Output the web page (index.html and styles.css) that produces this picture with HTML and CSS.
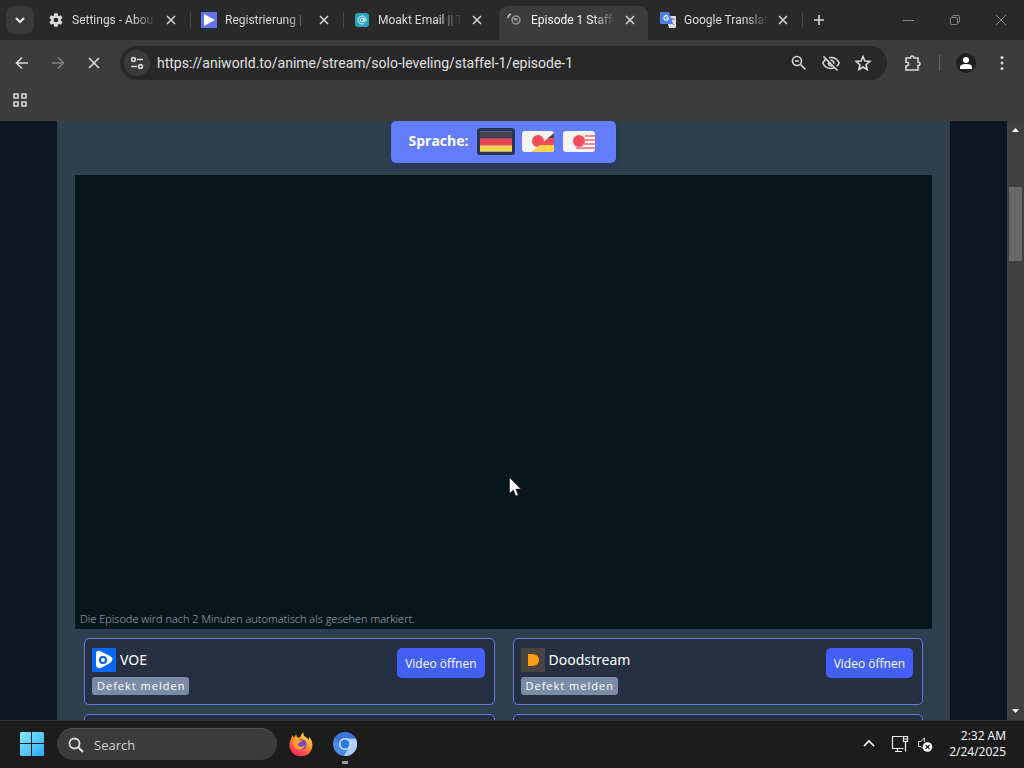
FILE: index.html
```html
<!DOCTYPE html>
<html lang="de">
<head>
<meta charset="utf-8">
<title>Episode 1 Staffel 1</title>
<link rel="stylesheet" href="styles.css">
</head>
<body>
<header class="browser">
  <div class="tabstrip">
    <button class="tab-search" aria-label="Search tabs"><svg width="12" height="12" viewBox="0 0 12 12"><path d="M2 4l4 4 4-4" fill="none" stroke="#e6e6e6" stroke-width="2"/></svg></button>
    <nav class="tabs" aria-label="Tabs">
      <div class="tab">
        <svg class="favicon" viewBox="0 0 24 24"><path fill="#d8d8d8" d="M19.4 13a7.500 7.500 0 0 0 0-2l2.100-1.600c.2-.2.300-.4.100-.6l-2-3.500c-.1-.2-.4-.3-.6-.2l-2.500 1a7.300 7.300 0 0 0-1.700-1L14.400 2.400c0-.2-.2-.4-.5-.4h-4c-.2 0-.4.200-.5.400L9 5.100c-.6.200-1.200.6-1.700 1l-2.500-1c-.2-.1-.5 0-.6.200l-2 3.500c-.1.200-.1.500.1.600L4.500 11a7.500 7.500 0 0 0 0 2l-2.200 1.600c-.2.200-.2.400-.1.600l2 3.500c.1.200.4.300.6.200l2.500-1c.5.400 1.100.7 1.700 1l.4 2.700c.1.200.3.400.5.400h4c.3 0 .5-.2.500-.4l.4-2.700c.6-.2 1.200-.6 1.700-1l2.500 1c.2.100.5 0 .6-.2l2-3.500c.1-.2.1-.5-.1-.6zM12 15.500a3.500 3.500 0 1 1 0-7 3.500 3.500 0 0 1 0 7z"/></svg>
        <button class="tab-title">Settings - Abou</button>
        <button class="close" aria-label="Close tab"><svg width="10" height="10" viewBox="0 0 10 10"><path d="M1 1l8 8M9 1L1 9"/></svg></button>
      </div>
      <div class="tab">
        <svg class="favicon" viewBox="0 0 16 16"><path fill="#6572f0" d="M0 0h16v16H0z"/><path fill="#fff" d="M3 2l11 6-11 6z"/></svg>
        <button class="tab-title">Registrierung |</button>
        <button class="close" aria-label="Close tab"><svg width="10" height="10" viewBox="0 0 10 10"><path d="M1 1l8 8M9 1L1 9"/></svg></button>
      </div>
      <div class="tab">
        <svg class="favicon" viewBox="0 0 16 16"><rect x="1" y="1" width="14" height="14" rx="3" fill="#2ba3bd"/><circle cx="8" cy="8" r="1.800" fill="none" stroke="#fff"/><path d="M10 6v3q1 1.500 2-.5A4 4 0 1 0 10 11.500" fill="none" stroke="#e5ffff"/></svg>
        <button class="tab-title">Moakt Email || T</button>
        <button class="close" aria-label="Close tab"><svg width="10" height="10" viewBox="0 0 10 10"><path d="M1 1l8 8M9 1L1 9"/></svg></button>
      </div>
      <div class="tab active">
        <svg class="favicon" viewBox="0 0 16 16"><path d="M1 6q0-3 3-4" fill="none" stroke="#c4c4c4" stroke-width="1.500"/><circle cx="9" cy="8" r="4" fill="none" stroke="#969696" stroke-width="1.500"/><path d="M6 6l3 0 2 1-1 2-3-1zM10 11l1-2 1 1z" fill="#969696"/></svg>
        <button class="tab-title">Episode 1 Staffe</button>
        <button class="close" aria-label="Close tab"><svg width="10" height="10" viewBox="0 0 10 10"><path d="M1 1l8 8M9 1L1 9"/></svg></button>
      </div>
      <div class="tab">
        <svg class="favicon" viewBox="0 0 16 16"><path fill="#ddd" d="M6 4h9a1 1 0 0 1 1 1v10a1 1 0 0 1-1 1H9z"/><path d="M9 7h6M12 6v1q0 4-3 5M10 9l4 4" stroke="#748196" fill="none"/><path fill="#4a7ee8" d="M1 0h8l4 12H1a1 1 0 0 1-1-1V1a1 1 0 0 1 1-1z"/><path d="M8 4.500A2.300 2.300 0 1 0 8.500 6H6" fill="none" stroke="#fff" stroke-width="1.100"/></svg>
        <button class="tab-title">Google Translat</button>
        <button class="close" aria-label="Close tab"><svg width="10" height="10" viewBox="0 0 10 10"><path d="M1 1l8 8M9 1L1 9"/></svg></button>
      </div>
    </nav>
    <button class="new-tab" aria-label="New tab"><svg width="12" height="12" viewBox="0 0 12 12"><path d="M6 1v10M1 6h10" stroke="#d8d8d8" stroke-width="1.600"/></svg></button>
    <div class="window-controls">
      <button aria-label="Minimize"><svg width="12" height="12" viewBox="0 0 12 12"><path d="M0 6.500h11"/></svg></button>
      <button aria-label="Restore"><svg width="12" height="12" viewBox="0 0 12 12"><rect x="1.500" y="3.500" width="7" height="7" rx="1"/><path d="M3.500 3V2.500q0-1 1-1h5q1 0 1 1v5q0 1-1.500 1"/></svg></button>
      <button aria-label="Close"><svg width="12" height="12" viewBox="0 0 12 12"><path d="M1 1l10 10M11 1L1 11"/></svg></button>
    </div>
  </div>
  <div class="toolbar">
    <button class="nav-button" aria-label="Back"><svg width="16" height="16" viewBox="0 0 16 16"><path d="M14 8H3M8 2.500L2.500 8 8 13.500"/></svg></button>
    <button class="nav-button dim" aria-label="Forward"><svg width="16" height="16" viewBox="0 0 16 16"><path d="M2 8h11M8 2.500L13.500 8 8 13.500"/></svg></button>
    <button class="nav-button" aria-label="Stop"><svg width="16" height="16" viewBox="0 0 16 16"><path d="M3 3l10 10M13 3L3 13"/></svg></button>
    <div class="omnibox">
      <button class="site-info" aria-label="Site information"><svg width="16" height="16" viewBox="0 0 16 16"><circle cx="4.500" cy="4.500" r="1.900"/><path d="M8 4.500h6M2 11.500h6"/><circle cx="11.500" cy="11.500" r="1.900"/></svg></button>
      <input class="url" aria-label="Address" value="https://aniworld.to/anime/stream/solo-leveling/staffel-1/episode-1">
      <button class="icon-button" aria-label="Zoom"><svg width="18" height="18" viewBox="0 0 18 18"><circle cx="7" cy="7" r="4.500"/><path d="M5 7h4M10.500 10.500l5 5"/></svg></button>
      <button class="icon-button" aria-label="Tracking protection"><svg width="20" height="18" viewBox="0 0 20 18"><path d="M2.500 2.500l14 14M5.500 4.800Q3 6.300 1.800 9q2.600 5.500 8.200 5.500 2 0 3.500-.7M8 3.700q7-1.200 10.200 5.300-.9 1.900-2.300 3.200M9.300 6.200q3.700 0 3.500 3.500M7.500 8q-.5 3.800 3.300 4"/></svg></button>
      <button class="icon-button" aria-label="Bookmark"><svg width="18" height="18" viewBox="0 0 18 18"><path d="M9 2.500l1.900 4.600 4.900.4-3.700 3.200 1.100 4.800L9 13l-4.200 2.500 1.100-4.800-3.700-3.200 4.900-.4z"/></svg></button>
    </div>
    <button class="icon-button extensions" aria-label="Extensions"><svg width="18" height="18" viewBox="0 0 18 18"><path d="M2 4h4.500q0-2 1.700-2T10 4h4v4q2 0 2 1.700T14 11.500V16H2v-4q2.500 0 2.500-2T2 8z"/></svg></button>
    <span class="divider"></span>
    <button class="profile" aria-label="Profile"><svg width="14" height="14" viewBox="0 0 14 14"><circle cx="7" cy="4" r="3" fill="#fff"/><path d="M1 13v-2q0-3 6-3t6 3v2z" fill="#fff"/></svg></button>
    <button class="icon-button" aria-label="Menu"><svg width="4" height="16" viewBox="0 0 4 16"><g fill="#d8d8d8" stroke="none"><circle cx="2" cy="2.500" r="1.500"/><circle cx="2" cy="8" r="1.500"/><circle cx="2" cy="13.500" r="1.500"/></g></svg></button>
  </div>
  <div class="bookmarks">
    <button class="nav-button" aria-label="Apps"><svg width="16" height="16" viewBox="0 0 16 16"><path d="M2 2h4v4H2zM10 2h4v4h-4zM2 10h4v4H2zM10 10h4v4h-4z"/></svg></button>
  </div>
</header>

<main class="viewport">
  <div class="page">
    <section class="panel">
      <div class="languages">
        <strong>Sprache:</strong>
        <button class="flag selected" aria-label="Deutsch"><svg viewBox="0 0 32 20"><path fill="#494452" d="M0 0h32v7H0z"/><path fill="#e94450" d="M0 7h32v7H0z"/><path fill="#ffd54b" d="M0 14h32v6H0z"/></svg></button>
        <button class="flag" aria-label="Japanisch mit deutschen Untertiteln"><svg viewBox="0 0 32 21"><path fill="#f5f5f5" d="M0 0h32v21H0z"/><circle cx="16" cy="10" r="6" fill="#f24c5a"/><path fill="#494452" d="M32 2v5h-6z"/><path fill="#f24c5a" d="M26 7h6v7H18z"/><path fill="#ffd54b" d="M18 14h14v7H9z"/></svg></button>
        <button class="flag" aria-label="Japanisch mit englischen Untertiteln"><svg viewBox="0 0 32 21"><path fill="#f5f5f5" d="M0 0h32v21H0z"/><circle cx="16" cy="10" r="6" fill="#f24c5a"/><path stroke="#f46670" stroke-width="1.700" d="M22 5h10M20 9h12M18 13h14M13 17h19"/></svg></button>
      </div>
      <div class="player"><p>Die Episode wird nach 2 Minuten automatisch als gesehen markiert.</p></div>
      <div class="hosters">
        <article class="hoster">
          <div>
            <h2><svg width="24" height="24" viewBox="0 0 24 24"><path fill="#0867f5" d="M0 0h24v24H0z"/><path fill="#fff" d="M4 6q0-4 4-3l10 5q5 3 0 7L9 20q-4 1-5-3z"/><circle cx="11" cy="12" r="4" fill="#075ce2"/><circle cx="11" cy="12" r="2" fill="#fff"/></svg>VOE</h2>
            <button class="report">Defekt melden</button>
          </div>
          <button class="open">Video öffnen</button>
        </article>
        <article class="hoster">
          <div>
            <h2><svg width="24" height="24" viewBox="0 0 24 24"><path fill="#474442" d="M0 0h24v24H0z"/><path fill="#ff9f13" d="M7 6h5q6 1 6 6t-6 6H7z"/></svg>Doodstream</h2>
            <button class="report">Defekt melden</button>
          </div>
          <button class="open">Video öffnen</button>
        </article>
        <article class="hoster"></article>
        <article class="hoster"></article>
      </div>
    </section>
  </div>
  <div class="scrollbar">
    <svg width="7" height="4" viewBox="0 0 7 4"><path fill="#fff" d="M0 4l3.500-4L7 4z"/></svg>
    <span class="thumb"></span>
    <svg width="7" height="4" viewBox="0 0 7 4"><path fill="#fff" d="M0 0l3.500 4L7 0z"/></svg>
  </div>
</main>

<footer class="taskbar">
  <button class="start" aria-label="Start"><svg width="24" height="24" viewBox="0 0 24 24"><defs><linearGradient id="win" x1="0" y1="0" x2="1" y2="1"><stop stop-color="#8be7ff"/><stop offset="1" stop-color="#27aef5"/></linearGradient></defs><path fill="url(#win)" d="M1 0h10v11H0V1zM12 0h11l1 1v10H12zM0 12h11v12H1l-1-1zM12 12h12v11l-1 1H12z"/></svg></button>
  <label class="search"><svg width="16" height="16" viewBox="0 0 16 16"><circle cx="6.500" cy="6.500" r="5" fill="none" stroke="#ddd" stroke-width="1.800"/><path d="M10.500 10.500l4.500 4.500" stroke="#ddd" stroke-width="2"/></svg><input placeholder="Search" aria-label="Search"></label>
  <button class="app" aria-label="Firefox"><svg width="24" height="24" viewBox="0 0 24 24"><defs><linearGradient id="fox" x1=".8" y1="0" x2=".2" y2="1"><stop stop-color="#fff04a"/><stop offset=".4" stop-color="#ff9a28"/><stop offset=".8" stop-color="#ff3c55"/><stop offset="1" stop-color="#e51b76"/></linearGradient></defs><path fill="url(#fox)" d="M14.500 0q-1 3 2 5 2.500 1 3 3l1-3q3 4 3 8A11.500 11.500 0 0 1 .5 13Q.5 8 3 5V3l2 2.500L7.500 2q-.5 2 1 3.500H11Q12 2 14.500 0z"/><circle cx="12" cy="12.500" r="5.500" fill="#7844c6"/><path fill="#ff9d2d" d="M4 7q4-2 7 1l3 .5-3 2q-2 0-2 3 4 3 7-1-1 6-7 5-6-2-5-10.500z"/></svg></button>
  <button class="app running" aria-label="Chromium"><svg width="24" height="24" viewBox="0 0 24 24"><circle cx="12" cy="12" r="12" fill="#4b8be9"/><path fill="#afceff" d="M12 6.500h10.700A12 12 0 0 1 11 24l5.500-9.500z"/><path fill="#2865ca" d="M2 5.500A12 12 0 0 1 22.500 6.500H12a5.500 5.500 0 0 0-5 7z" opacity=".55"/><circle cx="12" cy="12" r="6" fill="#d3e5ff"/><circle cx="12" cy="12" r="4.500" fill="#2878e6"/></svg></button>
  <div class="tray">
    <button aria-label="Show hidden icons"><svg width="12" height="12" viewBox="0 0 12 12"><path d="M1 8l5-5 5 5" fill="none" stroke="#fff" stroke-width="1.600"/></svg></button>
    <button class="status" aria-label="Network and volume"><svg width="18" height="18" viewBox="0 0 18 18" fill="none" stroke="#eee" stroke-width="1.200"><path d="M11.500 1.500h-10v12h11M4 16.500h7M6.500 13.500v3M12.500 1.500h4v5h-4zM14.500 6.500v10M12.500 4h4"/></svg><svg width="16" height="18" viewBox="0 0 16 18"><path d="M7.500 3L4 6.500H1.500v5H4l2 2M7.500 3v4" fill="none" stroke="#ddd"/><circle cx="10.500" cy="12" r="4.800" fill="#fff"/><path d="M8.500 10l4 4m0-4l-4 4" stroke="#222" stroke-width="1.200"/></svg></button>
    <button class="clock"><time>2:32 AM</time><time>2/24/2025</time></button>
  </div>
</footer>
<svg class="pointer" width="12" height="20" viewBox="0 0 12 20"><path fill="#fff" stroke="#111" stroke-width=".5" d="M.5.500v16l3.800-3.600 2.500 6 2.500-1-2.500-5.800h5z"/></svg>
</body>
</html>
```
FILE: styles.css
```css
* { box-sizing: border-box; }
body {
  display: flex;
  flex-direction: column;
  height: 100vh;
  margin: 0;
  overflow: hidden;
  background: #1c1c1c;
  color: #fff;
  font-family: "Noto Sans", "Open Sans", sans-serif;
}
button {
  display: flex;
  flex-shrink: 0;
  align-items: center;
  justify-content: center;
  padding: 0;
  border: 0;
  background: none;
  color: inherit;
  font: inherit;
}
svg { flex-shrink: 0; }
input { min-width: 0; border: 0; outline: 0; background: none; color: inherit; font: inherit; }

.browser { flex: none; background: #3c3c3c; }
.tabstrip { display: flex; align-items: center; height: 40px; padding-left: 6px; background: #292929; }
.tab-search { width: 28px; height: 28px; border-radius: 9px; background: #3a3a3a; }
.tabs { display: flex; flex: 0 1 765px; align-self: stretch; min-width: 0; margin-left: 4px; }
.tab {
  display: flex;
  flex: 1 1 0;
  align-items: center;
  min-width: 0;
  padding: 0 13px 0 10px;
  background: linear-gradient(#444, #444) right center / 1px 16px no-repeat;
}
.tab:nth-child(3) { background: none; }
.tab.active { align-self: flex-end; height: 34px; margin: 0 2px; padding: 0 11px 6px 8px; border-radius: 9px 9px 0 0; background: #3c3c3c; }
.favicon { width: 16px; height: 16px; }
.tab-title {
  flex: 1;
  justify-content: flex-start;
  min-width: 0;
  margin: 0 4px 0 8px;
  color: #d8d8d8;
  font-family: Roboto, sans-serif;
  font-size: 12px;
  line-height: 20px;
  white-space: nowrap;
  mask-image: linear-gradient(to right, #000 62px, transparent 84px);
}
.active .tab-title { color: #f4f4f4; }
.close { width: 14px; height: 16px; }
.close svg { fill: none; stroke: #d8d8d8; stroke-width: 1.5; }
.new-tab { width: 28px; height: 28px; margin-left: 2px; }
.window-controls { display: flex; align-self: stretch; margin-left: auto; }
.window-controls button { width: 46px; }
.window-controls svg { fill: none; stroke: #858585; }

.toolbar { display: flex; align-items: center; height: 46px; padding: 0 7px 0 8px; }
.nav-button { width: 28px; height: 28px; margin-right: 8px; }
.nav-button svg, .site-info svg, .icon-button svg { fill: none; stroke: #d8d8d8; stroke-width: 1.6; }
.nav-button.dim svg { stroke: #808080; }
.omnibox { display: flex; flex: 1; align-items: center; min-width: 0; height: 34px; margin-left: 4px; padding: 0 8px 0 4px; border-radius: 17px; background: #282828; }
.site-info { width: 26px; height: 26px; border-radius: 50%; background: #3a3a3a; }
.url { flex: 1; padding: 0; margin-left: 7px; color: #e0e0e0; font-family: Roboto, sans-serif; font-size: 14px; }
.icon-button { width: 32px; height: 28px; }
.icon-button:last-child { width: 30px; }
.omnibox .icon-button:last-child { width: 32px; }
.extensions { margin-left: 10px; }
.divider { width: 1px; height: 16px; margin: 0 16px 0 10px; background: #686868; }
.profile { width: 20px; height: 20px; margin-right: 11px; border-radius: 50%; background: #1f1f1f; }
.bookmarks { height: 35px; padding: 0 6px; }

.viewport { display: flex; flex: 1; min-height: 0; background: #101722; }
.page { flex: 1; min-width: 0; padding: 0 57px; overflow: hidden; }
.panel { padding: 0 18px; background: #2f404d; }
.languages {
  display: flex;
  align-items: center;
  width: fit-content;
  height: 42px;
  margin: 0 auto;
  padding: 0 18px 2px 17px;
  border-radius: 5px;
  background: #637cf9;
  box-shadow: 0 2px 8px #253461;
  font-family: "Open Sans", sans-serif;
  font-size: 14px;
}
.languages strong { margin-right: 8px; padding-bottom: 2px; }
.flag { width: 32px; height: 21px; margin-right: 3px; overflow: hidden; border-radius: 3px; }
.flag + .flag { margin-left: 6px; }
.flag svg { width: 100%; height: 100%; }
.flag.selected { width: 38px; height: 27px; margin-right: 1px; border: 3px solid #26344d; }
.player { display: flex; align-items: flex-end; aspect-ratio: 857 / 454; margin-top: 12px; padding: 0 5px; background: #07151c; }
.player p { margin: 0; color: #a9b5b9; font-family: "Open Sans", sans-serif; font-size: 11px; font-weight: 300; line-height: 20px; }
.hosters { display: grid; grid-template-columns: 1fr 1fr; gap: 9px 18px; padding: 9px; }
.hoster { display: flex; align-items: flex-start; justify-content: space-between; min-height: 67px; padding: 9px 9px 9px 7px; border: 1px solid #6878df; border-radius: 5px; background: #253043; }
.hoster h2 { display: flex; align-items: center; gap: 4px; height: 24px; margin: 0 0 5px; font-size: 14px; font-weight: 400; line-height: 20px; }
.report { height: 18px; padding: 0 4px 2px 5px; border-radius: 3px; background: #7b8ba5; font-family: "Open Sans", sans-serif; font-size: 11px; letter-spacing: 1px; }
.open { height: 30px; padding: 0 8px; border-radius: 5px; background: #425ff8; font-family: "Open Sans", sans-serif; font-size: 12px; }
.scrollbar { display: flex; flex: none; flex-direction: column; align-items: center; width: 17px; padding: 7px 0; background: #404040; }
.thumb { width: 13px; height: 74px; margin: 55px 0 auto; background: #686868; }

.taskbar { display: flex; flex: none; align-items: center; height: 48px; padding: 0 18px 1px 20px; border-top: 1px solid #343434; background: #1c1c1c; }
.start { width: 24px; }
.search { display: flex; align-items: center; flex: 0 1 220px; gap: 10px; height: 32px; margin: 0 12px 0 13px; padding: 0 11px; border-top: 1px solid #555; border-radius: 16px; background: #3b3b3b; font-family: "Open Sans", sans-serif; font-size: 13px; }
.search input { width: 100%; padding: 0; }
.search input::placeholder { color: #cfcfcf; opacity: 1; }
.app { width: 24px; height: 46px; margin-right: 20px; }
.running { background: linear-gradient(#999, #999) center bottom 3px / 6px 3px no-repeat; }
.tray { display: flex; align-items: center; margin-left: auto; }
.status { gap: 8px; margin: 0 16px; }
.clock { flex-direction: column; align-items: flex-end; font-family: "Open Sans", sans-serif; font-size: 12px; line-height: 16px; }
.pointer { position: absolute; top: 477px; left: 509px; }
```
